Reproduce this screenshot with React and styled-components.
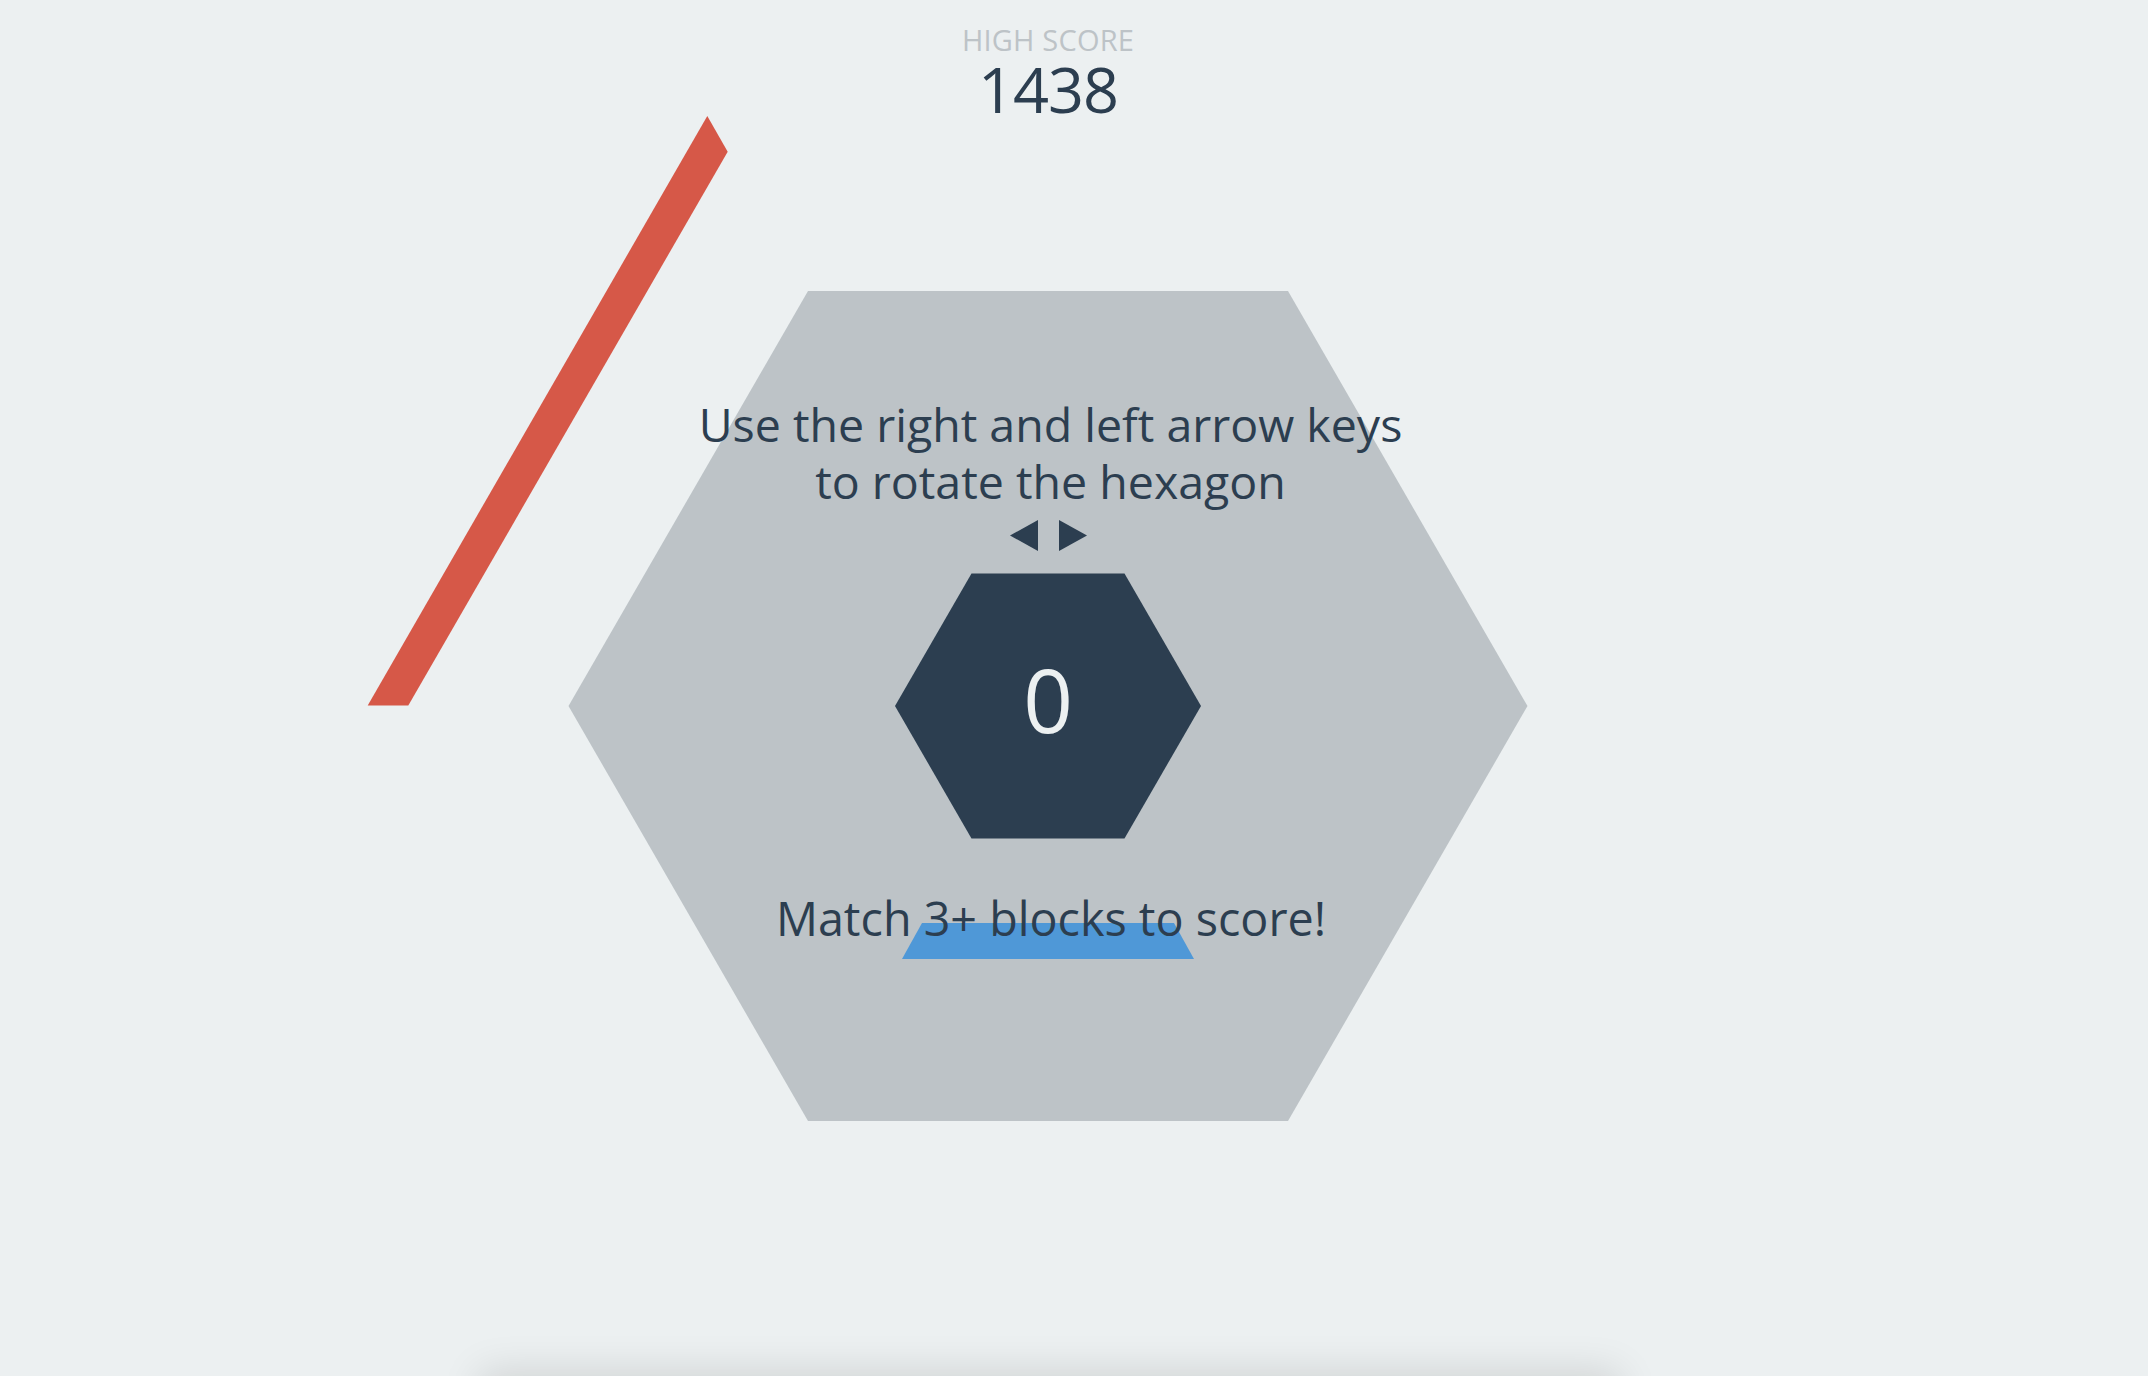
import React from "react";
import styled, { createGlobalStyle } from "styled-components";

const Global = createGlobalStyle`
  html, body { margin: 0; padding: 0; background: #ecf0f1; overflow: hidden; }
  body { font-family: "Open Sans", "Noto Sans", sans-serif; }
`;

const Page = styled.div`
  width: 2148px;
  height: 1376px;
  display: grid;
  grid-template: 1fr / 1fr;
  background: #ecf0f1;
  overflow: hidden;
`;

const Canvas = styled.svg`
  grid-area: 1 / 1;
  width: 2148px;
  height: 1376px;
  display: block;
`;

const Hud = styled.div`
  grid-area: 1 / 1;
  z-index: 1;
  display: flex;
  flex-direction: column;
  align-items: center;
  padding: 25px 52px 0 0;
  color: #2c3e50;
  font-family: "Open Sans", "Noto Sans", sans-serif;
`;

const ScoreLabel = styled.div`
  font-size: 29px;
  line-height: 29px;
  color: #bdc3c7;
  letter-spacing: 0.2px;
`;

const ScoreValue = styled.div`
  margin-top: 3px;
  font-size: 63px;
  line-height: 63px;
  color: #2c3e50;
  letter-spacing: -1px;
`;

const Instructions = styled.p`
  margin: 276px 0 0 5px;
  font-size: 46.5px;
  line-height: 57px;
  text-align: center;
  color: #2c3e50;
`;

const Arrows = styled.div`
  margin-top: 10px;
  display: flex;
  gap: 21px;
  height: 31px;
`;

const Arrow = styled.svg`
  width: 28px;
  height: 31px;
  display: block;
  fill: #2c3e50;
`;

const Score = styled.div`
  margin-top: 105px;
  font-size: 87px;
  line-height: 87px;
  color: #ecf0f1;
`;

const Hint = styled.div`
  margin: 152px 0 0 6px;
  font-size: 46.7px;
  line-height: 46.7px;
  color: #2c3e50;
`;

export default function App() {
  return (
    <>
      <Global />
      <Page>
        <Canvas viewBox="0 0 2148 1376">
          <defs>
            <filter id="soft" x="-20%" y="-200%" width="140%" height="500%">
              <feGaussianBlur stdDeviation="20" />
            </filter>
          </defs>
          <rect x="480" y="1372" width="1140" height="70" fill="#000" opacity="0.12" filter="url(#soft)" />
          <polygon
            points="568.5,706 808,291 1288,291 1527.5,706 1288,1121 808,1121"
            fill="#bdc3c7"
          />
          <polygon
            points="895,706 971.5,573.5 1124.5,573.5 1201,706 1124.5,838.5 971.5,838.5"
            fill="#2c3e50"
          />
          <polygon
            points="367.7,705.5 408.3,705.5 727.7,151.7 707.3,116"
            fill="#d65848"
          />
          <polygon points="902,959 1194,959 1174,923 922,923" fill="#4f98d7" />
        </Canvas>
        <Hud>
          <ScoreLabel>HIGH SCORE</ScoreLabel>
          <ScoreValue>1438</ScoreValue>
          <Instructions>
            Use the right and left arrow keys
            <br />
            to rotate the hexagon
          </Instructions>
          <Arrows>
            <Arrow viewBox="0 0 28 31">
              <polygon points="0,15.5 28,0 28,31" />
            </Arrow>
            <Arrow viewBox="0 0 28 31">
              <polygon points="0,0 28,15.5 0,31" />
            </Arrow>
          </Arrows>
          <Score>0</Score>
          <Hint>Match 3+ blocks to score!</Hint>
        </Hud>
      </Page>
    </>
  );
}
